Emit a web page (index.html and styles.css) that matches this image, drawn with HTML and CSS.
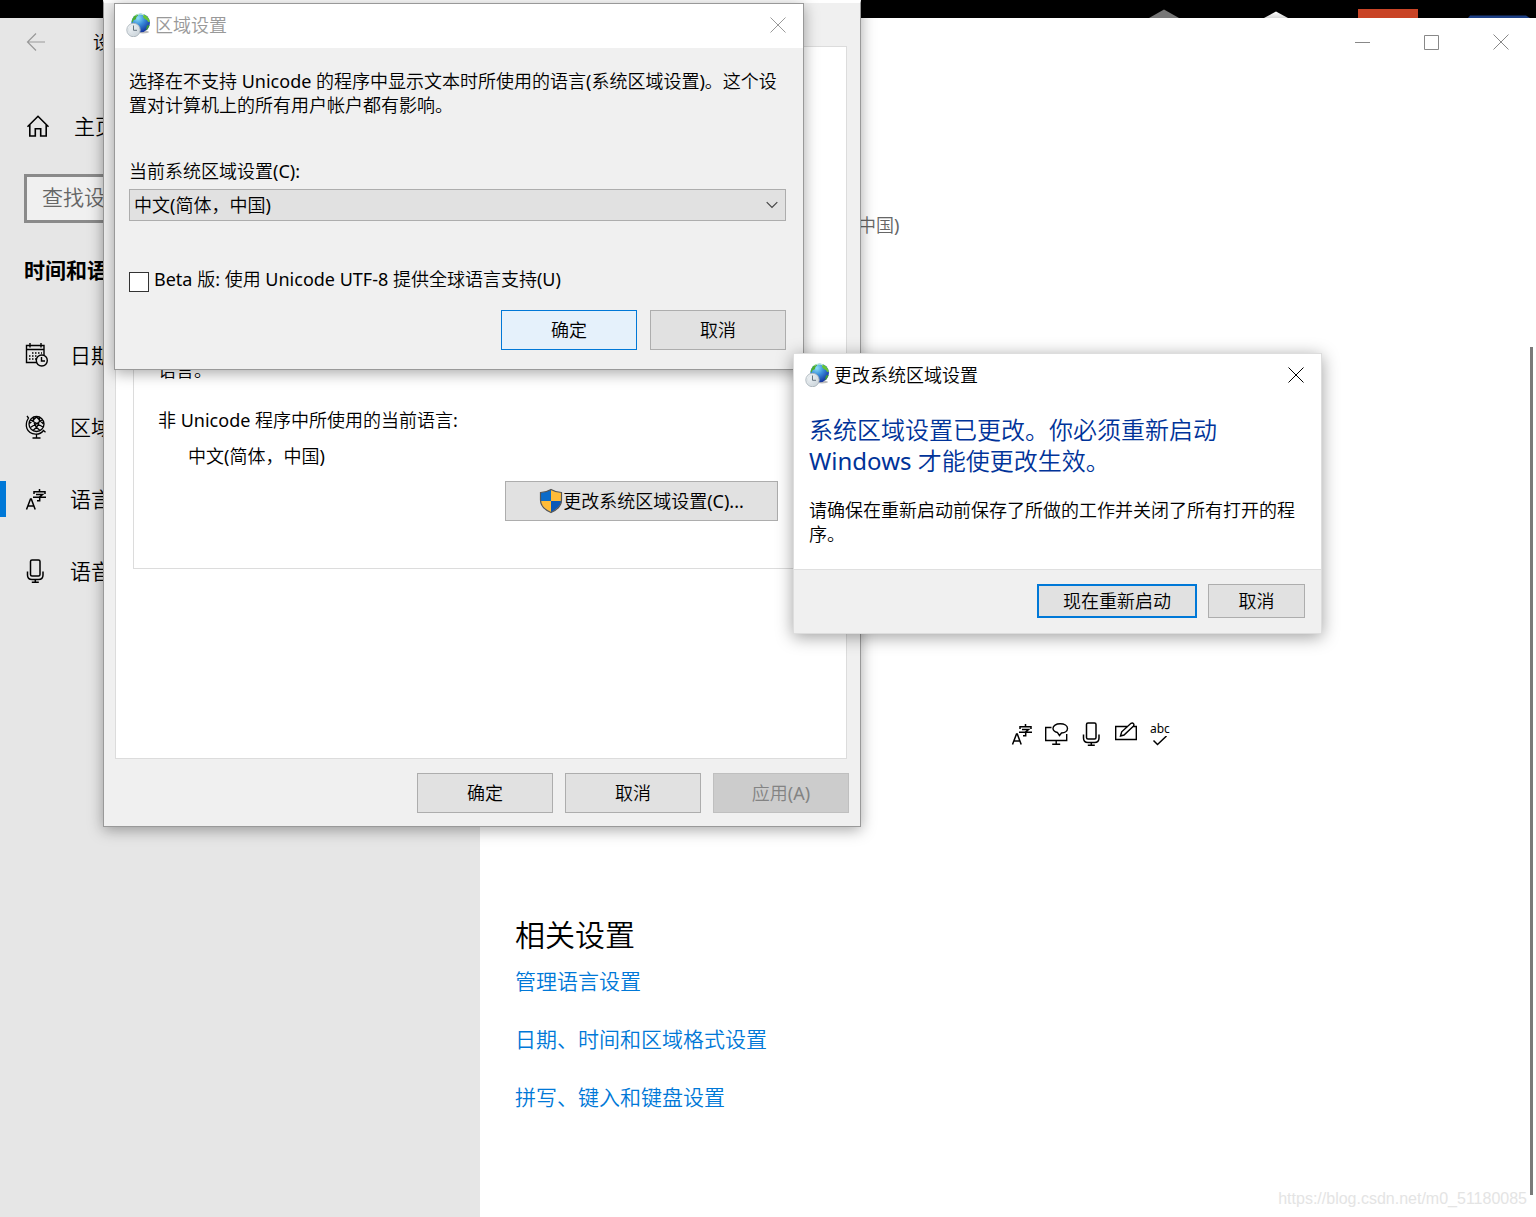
FILE: index.html
```html
<!DOCTYPE html>
<html lang="zh-CN">
<head>
<meta charset="utf-8">
<title>设置</title>
<link rel="stylesheet" href="styles.css">
</head>
<body>
<svg class="defs" width="0" height="0" aria-hidden="true">
  <defs>
    <radialGradient id="sea" cx="35%" cy="25%" r="80%">
      <stop offset="0" stop-color="#8fe0f5"/><stop offset=".45" stop-color="#3a8edb"/><stop offset="1" stop-color="#12309c"/>
    </radialGradient>
    <linearGradient id="dial" x1="0" y1="0" x2="1" y2="1">
      <stop offset="0" stop-color="#fbfdfe"/><stop offset="1" stop-color="#c3ced6"/>
    </linearGradient>
    <linearGradient id="pale" x1="0" y1="0" x2="0" y2="1">
      <stop offset="0" stop-color="#fff"/><stop offset="1" stop-color="#d8d8d8"/>
    </linearGradient>
  </defs>
  <symbol id="i-region" viewBox="0 0 24 24">
    <ellipse cx="17" cy="19" rx="6" ry="1.5" fill="#bbb"/>
    <circle cx="14.600" cy="9.800" r="9.400" fill="url(#sea)"/>
    <path d="M5.600 8.500C6.400 4.600 9 1.800 11.500 1l.5 1.600-1.600 1.400-.5 2.200-2.400 1-1 2.600z" fill="#4fae2c"/>
    <path d="M17 1.500l3 1c2 1.500 3.400 3.600 3.800 6.200l-1.600.4-1.300-2.200-2.200-.8-1.600-2z" fill="#67c436"/>
    <path d="M21 12.500l2.500-.5c-.6 2.500-1.800 4.500-3.600 5.600z" fill="#3f9a35"/>
    <path d="M9.500 2.300c2.500-1.500 6-1.600 8.500-.3" stroke="#c9f3d0" stroke-width="1" fill="none"/>
    <circle cx="7.500" cy="17" r="6.700" fill="url(#dial)" stroke="#a9b3ba" stroke-width=".9"/>
    <circle cx="7.500" cy="17" r="5" fill="none" stroke="#d3dade" stroke-width=".6"/>
    <path d="M7.500 12.500V17.300H11" fill="none" stroke="#66747f" stroke-width="1"/>
  </symbol>
  <symbol id="i-close" viewBox="0 0 16 16"><path d="M.5.5l15 15M15.500.5l-15 15" fill="none" stroke="currentColor" stroke-width="1"/></symbol>
  <symbol id="i-lang" viewBox="0 0 24 24">
    <g fill="none" stroke="currentColor" stroke-width="1.500">
      <path d="M2.500 22.500L6.500 12h.8L11.200 22.500M3.900 19h6"/>
      <path d="M15.500 2v2.300M10 7V4.700h11V7M12 7.500h6.500l-2.800 2.300v4h-2.700M9 10.300h13"/>
    </g>
  </symbol>
  <symbol id="i-mic" viewBox="0 0 24 24">
    <g fill="none" stroke="currentColor" stroke-width="1.500">
      <rect x="6.500" y="1" width="9.500" height="16" rx="1.500"/>
      <path d="M3.500 12.500v3.500q0 4.500 4.500 4.500h6.500q4.500 0 4.500-4.500v-3.500M11.300 20.500v3M7.800 23.200h7"/>
    </g>
  </symbol>
</svg>

<div class="desktop">
  <svg width="400" height="18" viewBox="0 0 400 18" aria-hidden="true">
    <path d="M13 18L28 9.500 43 18z" fill="#777"/>
    <path d="M128 18L140 11.500 152 18z" fill="url(#pale)"/>
    <path d="M222 9h60v9h-60z" fill="#c94426"/>
    <path d="M332 18l2-2.500h56l4 2.500z" fill="#1c3f85"/>
  </svg>
</div>

<div class="settings">
  <aside class="sidebar">
    <div class="side-caption">
      <button class="plain back" aria-label="返回"><svg width="20" height="20" viewBox="0 0 20 20"><path d="M10 1.500L1.500 10l8.500 8.500M1.500 10H19" fill="none" stroke="currentColor" stroke-width="1.200"/></svg></button>
      <span>设置</span>
    </div>
    <a class="home" href="#home">
      <svg width="24" height="24" viewBox="0 0 24 24"><path d="M1.500 12.800L12 2.300l10.500 10.500M3.800 11v11h5.500v-7.200h5.400V22h5.500V11" fill="none" stroke="currentColor" stroke-width="1.600"/></svg>
      <span>主页</span>
    </a>
    <input class="search" type="search" placeholder="查找设置" aria-label="查找设置">
    <h2 class="side-title">时间和语言</h2>
    <nav class="side-nav">
      <a href="#date">
        <svg width="24" height="24" viewBox="0 0 24 24"><g fill="none" stroke="currentColor" stroke-width="1.400"><path d="M13 19.500H2.500V2.500h17.500V12M2.500 6.500h17.500M6 0v4.500M17 0v4.500"/><circle cx="17.800" cy="17.500" r="5.500"/><path d="M17.500 14v4h3.500"/><path d="M8 10H18M5 13h9M5 16h7" stroke-dasharray="1.500 1.500"/></g></svg>
        <span>日期和时间</span>
      </a>
      <a href="#region">
        <svg width="24" height="24" viewBox="0 0 24 24"><g fill="none" stroke="currentColor" stroke-width="1.300"><circle cx="12.500" cy="9" r="7.500"/><path d="M6.500 5l12.500 7M6.300 12.500L18.500 5M9.500 2c-.5 6 2 10.500 6.500 13.500M15.500 2c.5 6-2 10.500-6.500 13.500M5.500 8.500L12.500 2l7 7"/><path d="M3 1l1.500 2C0 10 2.500 18.700 11.500 19.200c4 .2 6.500-1.700 8-3.700l2 1.700M12.500 19v4M8.500 23h8"/></g></svg>
        <span>区域</span>
      </a>
      <a class="active" href="#language" aria-current="page"><svg width="24" height="24"><use href="#i-lang"/></svg><span>语言</span></a>
      <a href="#speech"><svg width="24" height="24"><use href="#i-mic"/></svg><span>语音</span></a>
    </nav>
  </aside>

  <main class="content">
    <div class="caption">
      <button class="plain" aria-label="最小化"><svg width="16" height="16" viewBox="0 0 16 16"><path d="M0 8.500h15" stroke="currentColor"/></svg></button>
      <button class="plain" aria-label="最大化"><svg width="16" height="16" viewBox="0 0 16 16"><path d="M.5 1.500h14v14H.5z" fill="none" stroke="currentColor"/></svg></button>
      <button class="plain" aria-label="关闭"><svg width="16" height="16"><use href="#i-close"/></svg></button>
    </div>
    <p class="locale">中国)</p>
    <div class="features">
      <svg width="24" height="24"><use href="#i-lang"/></svg>
      <svg width="24" height="24" viewBox="0 0 24 24"><g fill="none" stroke="currentColor" stroke-width="1.400"><path d="M6.500 5.500H.7v13h21V12M11.200 18.500v3.300M7.200 22.300h8"/><path d="M12.500 10.500c-3-.8-4.500-2.300-4.500-4C8 3.700 11 1.700 15.200 1.700s7.300 2 7.300 4.800-2.900 4.400-6 4.500L14.500 13.500z"/></g></svg>
      <svg width="24" height="24"><use href="#i-mic"/></svg>
      <svg width="24" height="24" viewBox="0 0 24 24"><g fill="none" stroke="currentColor" stroke-width="1.400"><path d="M13 4.500H.7v13h20.600v-13h-3.500M5.500 14l1.200-4.200L16 1.300q1.600-.8 2.500.4t-.2 2.600L9 13z"/></g></svg>
      <span class="spell"><span>abc</span><svg width="16" height="10" viewBox="0 0 16 10"><path d="M1.500 4.500l4 4L14.500 0" fill="none" stroke="currentColor" stroke-width="1.500"/></svg></span>
    </div>
    <h1 class="related">相关设置</h1>
    <nav class="links">
      <a href="#manage">管理语言设置</a>
      <a href="#formats">日期、时间和区域格式设置</a>
      <a href="#typing">拼写、键入和键盘设置</a>
    </nav>
  </main>
  <div class="scroll-thumb"></div>
  <div class="watermark">https://blog.csdn.net/m0_51180085</div>
</div>

<section class="dialog admin" aria-label="区域">
  <div class="tab-page">
    <div class="group">
      <p>语言。</p>
      <p class="group-label">非 Unicode 程序中所使用的当前语言:</p>
      <p class="group-value">中文(简体，中国)</p>
      <button class="btn change">
        <svg width="24" height="26" viewBox="0 0 24 26"><path d="M12 1.500v11.500H1.500V4.500Q7 4.500 12 1.500z" fill="#0b6bc9"/><path d="M12 1.500Q17 4.500 22.500 4.500V13H12z" fill="#ffbb38"/><path d="M1.500 13H12v11.500Q2 19 1.500 13z" fill="#ffbb38"/><path d="M12 13h10.500Q22 19 12 24.500z" fill="#0858b8"/><path d="M12 1.500Q17 4.500 22.500 4.500V12q0 8-10.500 12.500Q1.500 20 1.500 12V4.500Q7 4.500 12 1.500z" fill="none" stroke="#555" stroke-width="1.200"/></svg>更改系统区域设置(C)...
      </button>
    </div>
  </div>
  <div class="actions">
    <button class="btn">确定</button>
    <button class="btn">取消</button>
    <button class="btn" disabled>应用(A)</button>
  </div>
</section>

<section class="dialog locale-dialog" aria-label="区域设置">
  <header class="titlebar inactive">
    <svg width="24" height="24"><use href="#i-region"/></svg>
    <span>区域设置</span>
    <button class="plain" aria-label="关闭"><svg width="16" height="16"><use href="#i-close"/></svg></button>
  </header>
  <div class="locale-body">
    <p>选择在不支持 Unicode 的程序中显示文本时所使用的语言(系统区域设置)。这个设置对计算机上的所有用户帐户都有影响。</p>
    <label class="field-label" for="locale">当前系统区域设置(C):</label>
    <div class="combo">
      <select id="locale"><option>中文(简体，中国)</option></select>
      <svg width="12" height="8" viewBox="0 0 12 8" aria-hidden="true"><path d="M.7 1.200L6 6.500l5.300-5.300" fill="none" stroke="#444" stroke-width="1.200"/></svg>
    </div>
    <label class="beta"><input type="checkbox"><span>Beta 版: 使用 Unicode UTF-8 提供全球语言支持(U)</span></label>
    <div class="actions">
      <button class="btn hot">确定</button>
      <button class="btn">取消</button>
    </div>
  </div>
</section>

<section class="dialog restart" aria-label="更改系统区域设置">
  <header class="titlebar">
    <svg width="24" height="24"><use href="#i-region"/></svg>
    <span>更改系统区域设置</span>
    <button class="plain" aria-label="关闭"><svg width="16" height="16"><use href="#i-close"/></svg></button>
  </header>
  <div class="restart-body">
    <h2>系统区域设置已更改。你必须重新启动 Windows 才能使更改生效。</h2>
    <p>请确保在重新启动前保存了所做的工作并关闭了所有打开的程序。</p>
  </div>
  <footer class="restart-actions">
    <button class="btn default">现在重新启动</button>
    <button class="btn">取消</button>
  </footer>
</section>
</body>
</html>
```

FILE: styles.css
```css
* {
  box-sizing: border-box;
}

body {
  position: relative;
  display: flex;
  flex-direction: column;
  min-height: 100vh;
  margin: 0;
  background: #fff;
  color: #000;
  font: 18px/24px "Noto Sans", "Noto Sans CJK SC DemiLight", "Noto Sans CJK SC", sans-serif;
  text-spacing-trim: space-all;
}

p, h1, h2 {
  margin: 0;
  font-weight: inherit;
}

a {
  color: inherit;
  text-decoration: none;
}

svg {
  display: block;
  flex: none;
}

button, input, select {
  font: inherit;
  color: inherit;
}

.defs {
  position: absolute;
}

.plain {
  display: flex;
  align-items: center;
  justify-content: center;
  padding: 0;
  border: 0;
  background: none;
}

/* Desktop strip above the settings window */
.desktop {
  display: flex;
  justify-content: flex-end;
  height: 18px;
  background: #000;
}

/* Settings window */
.settings {
  position: relative;
  display: flex;
  flex: 1;
}

.sidebar {
  flex: none;
  width: 480px;
  padding: 0 24px;
  background: #e6e6e6;
}

.side-caption {
  display: flex;
  align-items: center;
  gap: 47px;
  height: 48px;
}

.back {
  margin-left: 2px;
  color: #999;
}

.home {
  display: flex;
  align-items: center;
  gap: 24px;
  height: 48px;
  margin-top: 36px;
  padding-left: 2px;
  font-size: 21px;
}

.search {
  display: block;
  width: 100%;
  height: 49px;
  margin-top: 24px;
  padding: 0 15px 4px;
  border: 3px solid #8a8a8a;
  border-radius: 0;
  background: #f0f0f0;
  font-size: 21px;
  appearance: none;
}

.search::placeholder {
  color: #666;
}

.side-title {
  margin-top: 35px;
  font-family: "Noto Sans", "Noto Sans CJK SC", sans-serif;
  font-size: 21px;
  font-weight: 700;
}

.side-nav {
  margin: 37px -24px 0;
}

.side-nav a {
  display: flex;
  align-items: center;
  gap: 22px;
  height: 72px;
  padding-left: 24px;
  font-size: 21px;
}

.side-nav .active {
  padding-left: 18px;
}

.side-nav .active::before {
  content: "";
  width: 6px;
  height: 36px;
  margin-right: -22px;
  margin-left: -18px;
  background: #0078d7;
}

.side-nav .active svg {
  margin-left: 18px;
}

.content {
  flex: 1;
  padding-left: 35px;
}

.caption {
  display: flex;
  justify-content: flex-end;
  height: 48px;
  padding-right: 1px;
}

.caption .plain {
  width: 69px;
  color: #888;
}

.locale {
  margin: 147px 0 0 343px;
  color: #666;
}

.features {
  display: flex;
  gap: 11px;
  margin: 485px 0 0 495px;
}

.spell {
  display: flex;
  flex-direction: column;
  align-items: center;
  font-size: 12px;
  line-height: 14px;
}

.related {
  margin-top: 169px;
  font-size: 30px;
  line-height: 40px;
}

.links {
  display: flex;
  flex-direction: column;
  align-items: flex-start;
  gap: 30px;
  margin-top: 12px;
  color: #0078d7;
  font-size: 21px;
  line-height: 28px;
}

.scroll-thumb {
  position: absolute;
  top: 329px;
  right: 3px;
  bottom: 22px;
  width: 3px;
  background: #7a7a7a;
}

.watermark {
  position: absolute;
  right: 9px;
  bottom: 6px;
  color: #e4e4e4;
  font: 16px/24px "Liberation Sans", sans-serif;
}

/* Dialogs */
.dialog {
  position: absolute;
  background: #f0f0f0;
}

.btn {
  display: flex;
  align-items: center;
  justify-content: center;
  width: 136px;
  height: 40px;
  padding: 0;
  border: 1px solid #adadad;
  background: #e1e1e1;
}

.btn:disabled {
  border-color: #bfbfbf;
  background: #ccc;
  color: #838383;
}

.btn.hot {
  border-color: #0078d7;
  background: #e5f1fb;
}

.btn.default {
  border: 2px solid #0078d7;
}

.actions {
  display: flex;
  justify-content: flex-end;
  gap: 13px;
}

.titlebar {
  display: flex;
  align-items: center;
  gap: 5px;
  height: 44px;
  padding: 0 17px 2px 11px;
  background: #fff;
}

.titlebar .plain {
  margin-left: auto;
}

.inactive {
  color: #999;
}

.admin {
  top: 0;
  left: 103px;
  width: 758px;
  padding: 43px 11px 13px;
  border: 1px solid #999;
  border-top: 3px solid #fff;
  box-shadow: 0 3px 14px rgba(0, 0, 0, .35);
}

.tab-page {
  height: 713px;
  margin-right: 2px;
  padding: 309px 17px 0;
  border: 1px solid #dcdcdc;
  background: #fff;
}

.group {
  height: 213px;
  padding: 1px 50px 0 24px;
  border: 1px solid #dcdcdc;
}

.group-label {
  margin-top: 26px;
}

.group-value {
  margin: 12px 0 0 30px;
}

.change {
  width: 273px;
  margin: 13px 0 0 auto;
}

.admin .actions {
  gap: 12px;
  margin: 14px 0 0;
}

.locale-dialog {
  top: 3px;
  left: 114px;
  width: 690px;
  border: 1px solid #999;
  box-shadow: 0 3px 14px rgba(0, 0, 0, .35);
}

.locale-body {
  padding: 21px 17px 19px 14px;
}

.field-label {
  display: block;
  margin-top: 42px;
}

.combo {
  display: grid;
  align-items: center;
  margin-top: 6px;
}

.combo > * {
  grid-area: 1 / 1;
}

.combo select {
  width: 100%;
  height: 32px;
  padding: 0 4px;
  border: 1px solid #adadad;
  border-radius: 0;
  background: #e1e1e1;
  appearance: none;
}

.combo svg {
  justify-self: end;
  margin-right: 8px;
}

.beta {
  display: flex;
  align-items: flex-start;
  gap: 5px;
  margin: 46px 0 18px;
}

.beta input {
  flex: none;
  width: 20px;
  height: 20px;
  margin: 5px 0 0;
  border: 1px solid #333;
  background: #fff;
  appearance: none;
}

.restart {
  top: 353px;
  left: 793px;
  width: 529px;
  border: 1px solid #ddd;
  box-shadow: 0 3px 16px rgba(0, 0, 0, .38);
}

.restart-body {
  padding: 16px 16px 23px 15px;
  background: #fff;
}

.restart-body h2 {
  color: #039;
  font-size: 24px;
  line-height: 31px;
}

.restart-body p {
  margin-top: 22px;
}

.restart-actions {
  display: flex;
  justify-content: flex-end;
  gap: 11px;
  padding: 14px 16px 15px;
  border-top: 1px solid #dfdfdf;
}

.restart-actions .btn {
  width: 97px;
  height: 34px;
}

.restart-actions .default {
  width: 160px;
}
```
